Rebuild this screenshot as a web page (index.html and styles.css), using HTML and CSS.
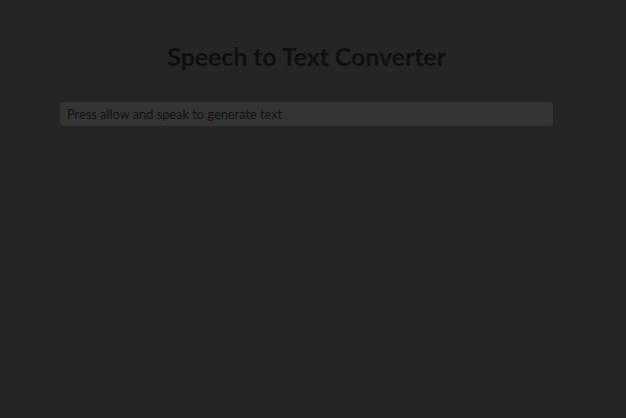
FILE: index.html
```html
<!DOCTYPE html>
<html>
<head>
<meta charset="utf-8">
<link rel="stylesheet" href="styles.css">
</head>
<body>
<main class="app">
  <h1 class="title">Speech to Text Converter</h1>
  <div class="output">Press allow and speak to generate text</div>
</main>
</body>
</html>
```
FILE: styles.css
```css
html, body {
  margin: 0;
  padding: 0;
  background: #262524;
  height: 100%;
}
body {
  font-family: Lato, "Open Sans", sans-serif;
  color: #111;
}
.app {
  display: flex;
  flex-direction: column;
  align-items: center;
  padding-top: 40px;
  padding-right: 13px;
}
.title {
  margin: 0;
  font-size: 25px;
  font-weight: 700;
  line-height: 32px;
  letter-spacing: -0.1px;
  color: #0f0f0f;
}
.output {
  margin-top: 30px;
  width: 493px;
  box-sizing: border-box;
  height: 24px;
  padding: 0 7px;
  background: #353434;
  border-radius: 4px;
  font-size: 12.8px;
  line-height: 24px;
  color: #121212;
}
```
